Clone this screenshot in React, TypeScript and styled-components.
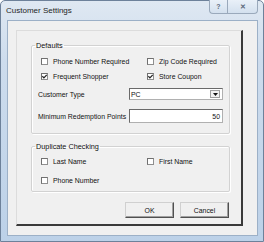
import React from "react";
import styled, { createGlobalStyle } from "styled-components";

const Global = createGlobalStyle`
  html, body { margin: 0; padding: 0; background: #fff; }
  body { width: 264px; height: 242px; overflow: hidden; font-family: "Liberation Sans", Arial, sans-serif; }
`;

const Window = styled.div`
  width: 264px;
  height: 242px;
  box-sizing: border-box;
  background: linear-gradient(180deg, #dfe8f2 0%, #cddced 25%, #bcd1e8 100%);
  border: 1px solid #6d819a;
  border-radius: 5px 5px 0 0;
  display: flex;
  flex-direction: column;
  padding: 0 5px 5px 6px;
  position: relative;
`;

const TitleBar = styled.div`
  height: 19px;
  display: flex;
  align-items: center;
  font-family: "Liberation Sans", sans-serif;
  font-size: 8px;
  color: #1e1e1e;
  padding-bottom: 1px;
  margin-left: -1px;
`;

const Caption = styled.div`
  position: absolute;
  top: -1px;
  right: 5px;
  display: flex;
  height: 14px;
`;

const CapBtn = styled.div<{ $w: number; $first?: boolean }>`
  width: ${(p) => p.$w}px;
  height: 14px;
  box-sizing: border-box;
  border: 1px solid #9aa9bb;
  border-top: none;
  ${(p) => (p.$first ? "border-radius: 0 0 0 4px; border-right: none;" : "border-radius: 0 0 4px 0;")}
  background: linear-gradient(180deg, #e9f0f8, #d3e0ee);
  display: flex;
  align-items: center;
  justify-content: center;
  color: #5d6b7c;
  font-size: 7px;
  font-weight: bold;
`;

const Client = styled.div`
  flex: 1;
  background: #f0f0f0;
  border: 1px solid #9cb0c7;
  padding: 9px 14px 9px 8px;
  display: flex;
`;

const Panel = styled.div`
  flex: 1;
  box-sizing: border-box;
  border-top: 1px solid #dcdcdc;
  border-left: 1px solid #dcdcdc;
  border-right: 2px solid #3a3a3a;
  border-bottom: 2px solid #3a3a3a;
  padding: 10px 11px 6px 14px;
  display: flex;
  flex-direction: column;
`;

const Group = styled.fieldset<{ $h: number; $mt?: number }>`
  margin: ${(p) => p.$mt ?? 0}px 0 0 0;
  min-width: 0;
  height: ${(p) => p.$h}px;
  box-sizing: border-box;
  border: 1px solid #d2d2d2;
  box-shadow: inset 1px 1px 0 #fff, 1px 1px 0 #fff;
  border-radius: 2px;
  padding: 0;
`;

const Legend = styled.legend`
  font-size: 7.3px;
  color: #111;
  padding: 0 1px;
  margin-left: 3px;
  line-height: 9px;
`;

const Grid = styled.div<{ $gap: number; $mt: number }>`
  display: grid;
  grid-template-columns: 106px 1fr;
  row-gap: ${(p) => p.$gap}px;
  margin-top: ${(p) => p.$mt}px;
  padding-left: 9px;
`;

const Check = styled.label`
  display: flex;
  align-items: center;
  gap: 5px;
  font-size: 6.9px;
  color: #111;
  height: 9px;
  white-space: nowrap;
`;

const Box = styled.span`
  width: 7px;
  height: 7px;
  flex: none;
  box-sizing: border-box;
  border: 1px solid #8f8f8f;
  border-top-color: #707070;
  border-left-color: #707070;
  background: #fff;
  display: flex;
  align-items: center;
  justify-content: center;
`;

const FieldRow = styled.div<{ $mt: number }>`
  display: flex;
  align-items: center;
  margin-top: ${(p) => p.$mt}px;
  padding-left: 6px;
  font-size: 6.9px;
  color: #111;
`;

const FieldLabel = styled.span`
  width: 91px;
  white-space: nowrap;
`;

const Input = styled.div<{ $right?: boolean; $h: number }>`
  width: 94px;
  height: ${(p) => p.$h}px;
  box-sizing: border-box;
  background: #fff;
  border: 1px solid #b0b0b0;
  border-top-color: #6a6a6a;
  border-left-color: #6a6a6a;
  display: flex;
  align-items: center;
  justify-content: ${(p) => (p.$right ? "flex-end" : "space-between")};
  padding: 0 2px 0 1px;
  font-size: 6.9px;
`;

const Arrow = styled.span`
  width: 10px;
  height: 8px;
  box-sizing: border-box;
  border: 1px solid #a0a0a0;
  background: #f2f2f2;
  display: flex;
  align-items: center;
  justify-content: center;
`;

const Buttons = styled.div`
  display: flex;
  justify-content: flex-end;
  gap: 6px;
  margin-top: 10px;
  padding-right: 1px;
`;

const Btn = styled.div`
  width: 49px;
  height: 16px;
  box-sizing: border-box;
  border: 1px solid #d0d0d0;
  border-right-color: #505050;
  border-bottom-color: #505050;
  box-shadow: inset -1px -1px 0 #a0a0a0;
  background: #f0f0f0;
  font-size: 6.9px;
  display: flex;
  align-items: center;
  justify-content: center;
  color: #111;
`;

const Tick = () => (
  <svg width="5" height="5" viewBox="0 0 5 5">
    <path d="M0.4 2.2 L1.9 3.8 L4.7 0.9" stroke="#222" strokeWidth="1.2" fill="none" />
  </svg>
);

const Cb = ({ label, on }: { label: string; on?: boolean }) => (
  <Check>
    <Box>{on && <Tick />}</Box>
    {label}
  </Check>
);

export default function App() {
  return (
    <>
      <Global />
      <Window>
        <TitleBar>Customer Settings</TitleBar>
        <Caption>
          <CapBtn $w={18} $first>?</CapBtn>
          <CapBtn $w={31}>✕</CapBtn>
        </Caption>
        <Client>
          <Panel>
            <Group $h={93}>
              <Legend>Defaults</Legend>
              <Grid $gap={6} $mt={7}>
                <Cb label="Phone Number Required" />
                <Cb label="Zip Code Required" />
                <Cb label="Frequent Shopper" on />
                <Cb label="Store Coupon" on />
              </Grid>
              <FieldRow $mt={7}>
                <FieldLabel>Customer Type</FieldLabel>
                <Input $h={12}>
                  PC
                  <Arrow>
                    <svg width="5" height="3" viewBox="0 0 5 3">
                      <path d="M0 0 H5 L2.5 3 Z" fill="#111" />
                    </svg>
                  </Arrow>
                </Input>
              </FieldRow>
              <FieldRow $mt={9}>
                <FieldLabel>Minimum Redemption Points</FieldLabel>
                <Input $h={14} $right>50</Input>
              </FieldRow>
            </Group>
            <Group $h={50} $mt={8}>
              <Legend>Duplicate Checking</Legend>
              <Grid $gap={10} $mt={6}>
                <Cb label="Last Name" />
                <Cb label="First Name" />
                <Cb label="Phone Number" />
              </Grid>
            </Group>
            <Buttons>
              <Btn>OK</Btn>
              <Btn>Cancel</Btn>
            </Buttons>
          </Panel>
        </Client>
      </Window>
    </>
  );
}
